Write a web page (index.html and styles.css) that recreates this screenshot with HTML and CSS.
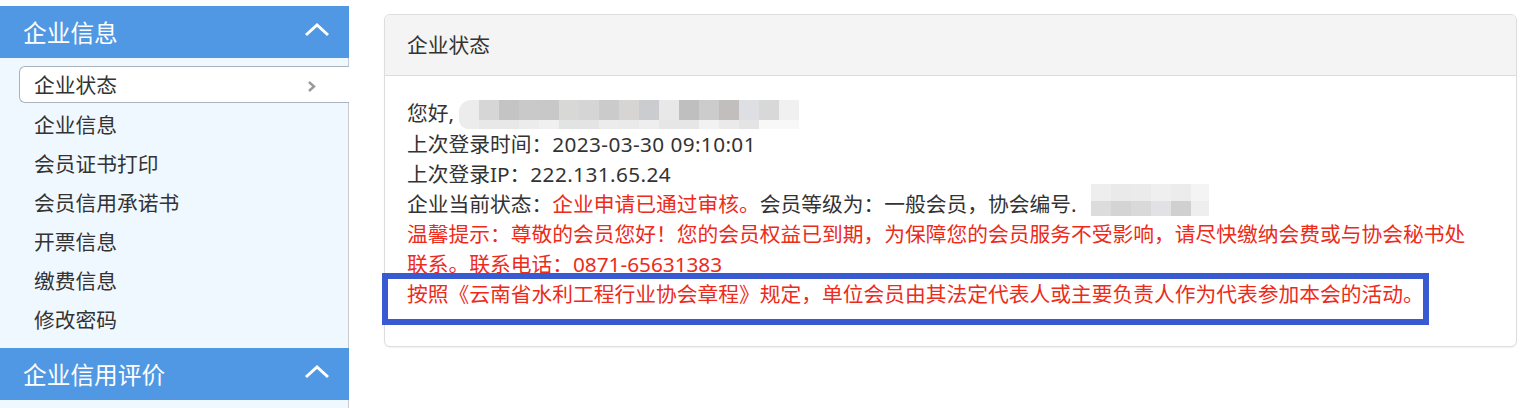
FILE: index.html
```html
<!DOCTYPE html>
<html>
<head>
	<meta charset="utf-8">
	<title>企业状态</title>
	<link rel="stylesheet" href="styles.css">
</head>
<body>
	<div class="page">
		<div class="sidebar">
			<div class="menu-head">
				<span>企业信息</span>
				<svg class="up" width="26" height="14" viewBox="0 0 26 14"><polyline points="2,12 13,2 24,12" fill="none" stroke="#fff" stroke-width="3"/></svg>
			</div>
			<ul class="menu">
				<li class="active"><a href="#">企业状态</a><svg class="arrow" width="9" height="13" viewBox="0 0 9 13"><polyline points="2,2 7,6.5 2,11" fill="none" stroke="#999" stroke-width="2.4"/></svg></li>
				<li><a href="#">企业信息</a></li>
				<li><a href="#">会员证书打印</a></li>
				<li><a href="#">会员信用承诺书</a></li>
				<li><a href="#">开票信息</a></li>
				<li><a href="#">缴费信息</a></li>
				<li><a href="#">修改密码</a></li>
			</ul>
			<div class="menu-head">
				<span>企业信用评价</span>
				<svg class="up" width="26" height="14" viewBox="0 0 26 14"><polyline points="2,12 13,2 24,12" fill="none" stroke="#fff" stroke-width="3"/></svg>
			</div>
		</div>
		<div class="main">
			<div class="panel">
				<div class="panel-heading">企业状态</div>
				<div class="panel-body">
					<p>
						您好,<span class="mosaic m1"><span class="row top"><i></i><i></i><i></i><i></i><i></i><i></i><i></i><i></i><i></i><i></i><i></i><i></i><i></i><i></i><i></i><i></i><i></i></span><span class="row bottom"><i></i><i></i><i></i><i></i><i></i><i></i><i></i><i></i><i></i><i></i><i></i><i></i><i></i><i></i><i></i><i></i><i></i></span></span><br>
						上次登录时间：<span class="num">2023-03-30 09:10:01</span><br>
						上次登录IP：<span class="num">222.131.65.24</span><br>
						企业当前状态：<span class="red">企业申请已通过审核。</span>会员等级为：一般会员，协会编号.<span class="mosaic m2"><span class="row top"><i></i><i></i><i></i><i></i><i></i><i></i></span><span class="row bottom"><i></i><i></i><i></i><i></i><i></i><i></i></span></span><br>
						<span class="red">温馨提示：尊敬的会员您好！您的会员权益已到期，为保障您的会员服务不受影响，请尽快缴纳会费或与协会秘书处联系。联系电话：0871-65631383</span><br>
						<span class="red">按照《云南省水利工程行业协会章程》规定，单位会员由其法定代表人或主要负责人作为代表参加本会的活动。</span>
					</p>
					<div class="mark"></div>
				</div>
			</div>
		</div>
	</div>
</body>
</html>
```

FILE: styles.css
```css
body{
	margin: 0;
	font-family: "Noto Sans", "Noto Sans CJK SC", sans-serif;
	font-size: 20.75px;
	color: #333;
	background: #fff;
	height: 408px;
	overflow: hidden;
}
.page{
	display: flex;
	align-items: flex-start;
}
.sidebar{
	width: 348px;
	margin-top: 6px;
	height: 402px;
	background-color: #f0f8ff;
	border-right: 1px solid #c8ccd0;
}
.menu-head{
	height: 52px;
	background-color: #5098e3;
	color: #fff;
	font-size: 23.7px;
	display: flex;
	align-items: center;
	justify-content: space-between;
	padding: 0 19px 0 23px;
	margin-right: -1px;
}
.menu-head .up{
	margin-top: -4px;
}
.menu{
	list-style: none;
	margin: 0;
	padding: 8px 0 8px 19px;
}
.menu li{
	height: 37px;
	line-height: 37px;
	margin-bottom: 2px;
	padding-left: 15px;
	display: flex;
	align-items: center;
	justify-content: space-between;
}
.menu li.active{
	background-color: #fff;
	border: 1px solid #aab4be;
	border-right: none;
	border-radius: 6px 0 0 6px;
	padding-left: 14px;
	padding-right: 33px;
	height: 35px;
	margin-right: -1px;
	margin-bottom: 3px;
}
.menu a{
	display: block;
	text-decoration: none;
	color: #333;
	padding-top: 2px;
}
.arrow{
	margin-top: 3px;
}
.main{
	flex: 1;
	padding: 14px 19px 0 35px;
}
.panel{
	border: 1px solid #ddd;
	border-radius: 6px;
	background: #fff;
	box-shadow: 0 1px 2px rgba(0,0,0,0.06);
}
.panel-heading{
	background-color: #f4f4f4;
	border-bottom: 1px solid #ddd;
	border-radius: 6px 6px 0 0;
	padding: 15px 22px;
	line-height: 30px;
}
.panel-body{
	padding: 22px 36px 22px 22px;
	position: relative;
}
.panel-body p{
	margin: 0 0 15px;
	line-height: 30px;
}
.num{
	letter-spacing: 0.4px;
}
.red{
	color: #ec2b1b;
}
.mosaic{
	display: inline-flex;
	flex-direction: column;
	vertical-align: top;
}
.mosaic .row{
	display: flex;
}
.mosaic i{
	display: block;
	width: 20px;
}
.m1{
	margin-top: 2px;
	margin-left: 5px;
}
.m1 .top i{ height: 20px; }
.m1 .bottom i{ height: 9px; }
.m1 .top i:first-child{ border-radius: 12px 0 0 0; }
.m1 .bottom i:first-child{ border-radius: 0 0 0 12px; }
.m1 .top i:nth-child(1){ background: #ececec; }
.m1 .top i:nth-child(2){ background: #d6d6d6; }
.m1 .top i:nth-child(3){ background: #c4c4c4; }
.m1 .top i:nth-child(4){ background: #c9c9c9; }
.m1 .top i:nth-child(5){ background: #c8c8c8; }
.m1 .top i:nth-child(6){ background: #d8d8d6; }
.m1 .top i:nth-child(7){ background: #d5d5d5; }
.m1 .top i:nth-child(8){ background: #cbcbcb; }
.m1 .top i:nth-child(9){ background: #d6d5d3; }
.m1 .top i:nth-child(10){ background: #cbcccf; }
.m1 .top i:nth-child(11){ background: #e8e8e8; }
.m1 .top i:nth-child(12){ background: #bfbfbf; }
.m1 .top i:nth-child(13){ background: #cccccc; }
.m1 .top i:nth-child(14){ background: #c2bebe; }
.m1 .top i:nth-child(15){ background: #dedfe2; }
.m1 .top i:nth-child(16){ background: #d8d8d8; }
.m1 .top i:nth-child(17){ background: #f0f0f0; }
.m1 .bottom i:nth-child(1){ background: #ececec; }
.m1 .bottom i:nth-child(2){ background: #e8e8e8; }
.m1 .bottom i:nth-child(3){ background: #e8e8e8; }
.m1 .bottom i:nth-child(4){ background: #ececec; }
.m1 .bottom i:nth-child(5){ background: #f0f0f0; }
.m1 .bottom i:nth-child(6){ background: #e2e4e4; }
.m1 .bottom i:nth-child(7){ background: #e4e4e4; }
.m1 .bottom i:nth-child(8){ background: #ececec; }
.m1 .bottom i:nth-child(9){ background: #eaeaea; }
.m1 .bottom i:nth-child(10){ background: #eeeeee; }
.m1 .bottom i:nth-child(11){ background: #e6e6e6; }
.m1 .bottom i:nth-child(12){ background: #e6e6e6; }
.m1 .bottom i:nth-child(13){ background: #f2f2f2; }
.m1 .bottom i:nth-child(14){ background: #eaeaea; }
.m1 .bottom i:nth-child(15){ background: #e4e4e4; }
.m1 .bottom i:nth-child(16){ background: #f8f8f8; }
.m1 .bottom i:nth-child(17){ background: #f8f8f8; }
.m2{
	margin-top: -5px;
	margin-left: 14px;
}
.m2 .top i{ height: 17px; }
.m2 .bottom i{ height: 15px; }
.m2 i:nth-child(6){ width: 18px; }
.m2 .top i:nth-child(1){ background: #eeeeee; }
.m2 .top i:nth-child(2){ background: #eaeaea; }
.m2 .top i:nth-child(3){ background: #ebebeb; }
.m2 .top i:nth-child(4){ background: #efefef; }
.m2 .top i:nth-child(5){ background: #ececec; }
.m2 .top i:nth-child(6){ background: #f4f4f4; }
.m2 .bottom i:nth-child(1){ background: #dcdcdc; }
.m2 .bottom i:nth-child(2){ background: #d4d4d4; }
.m2 .bottom i:nth-child(3){ background: #d9d9d9; }
.m2 .bottom i:nth-child(4){ background: #e2e2e4; }
.m2 .bottom i:nth-child(5){ background: #d0d0d0; }
.m2 .bottom i:nth-child(6){ background: #eeeeee; }
/* 标注框 */
.mark{
	position: absolute;
	left: -3px;
	top: 197px;
	width: 1035px;
	height: 40px;
	border: 6px solid #3a5ad2;
}
```
